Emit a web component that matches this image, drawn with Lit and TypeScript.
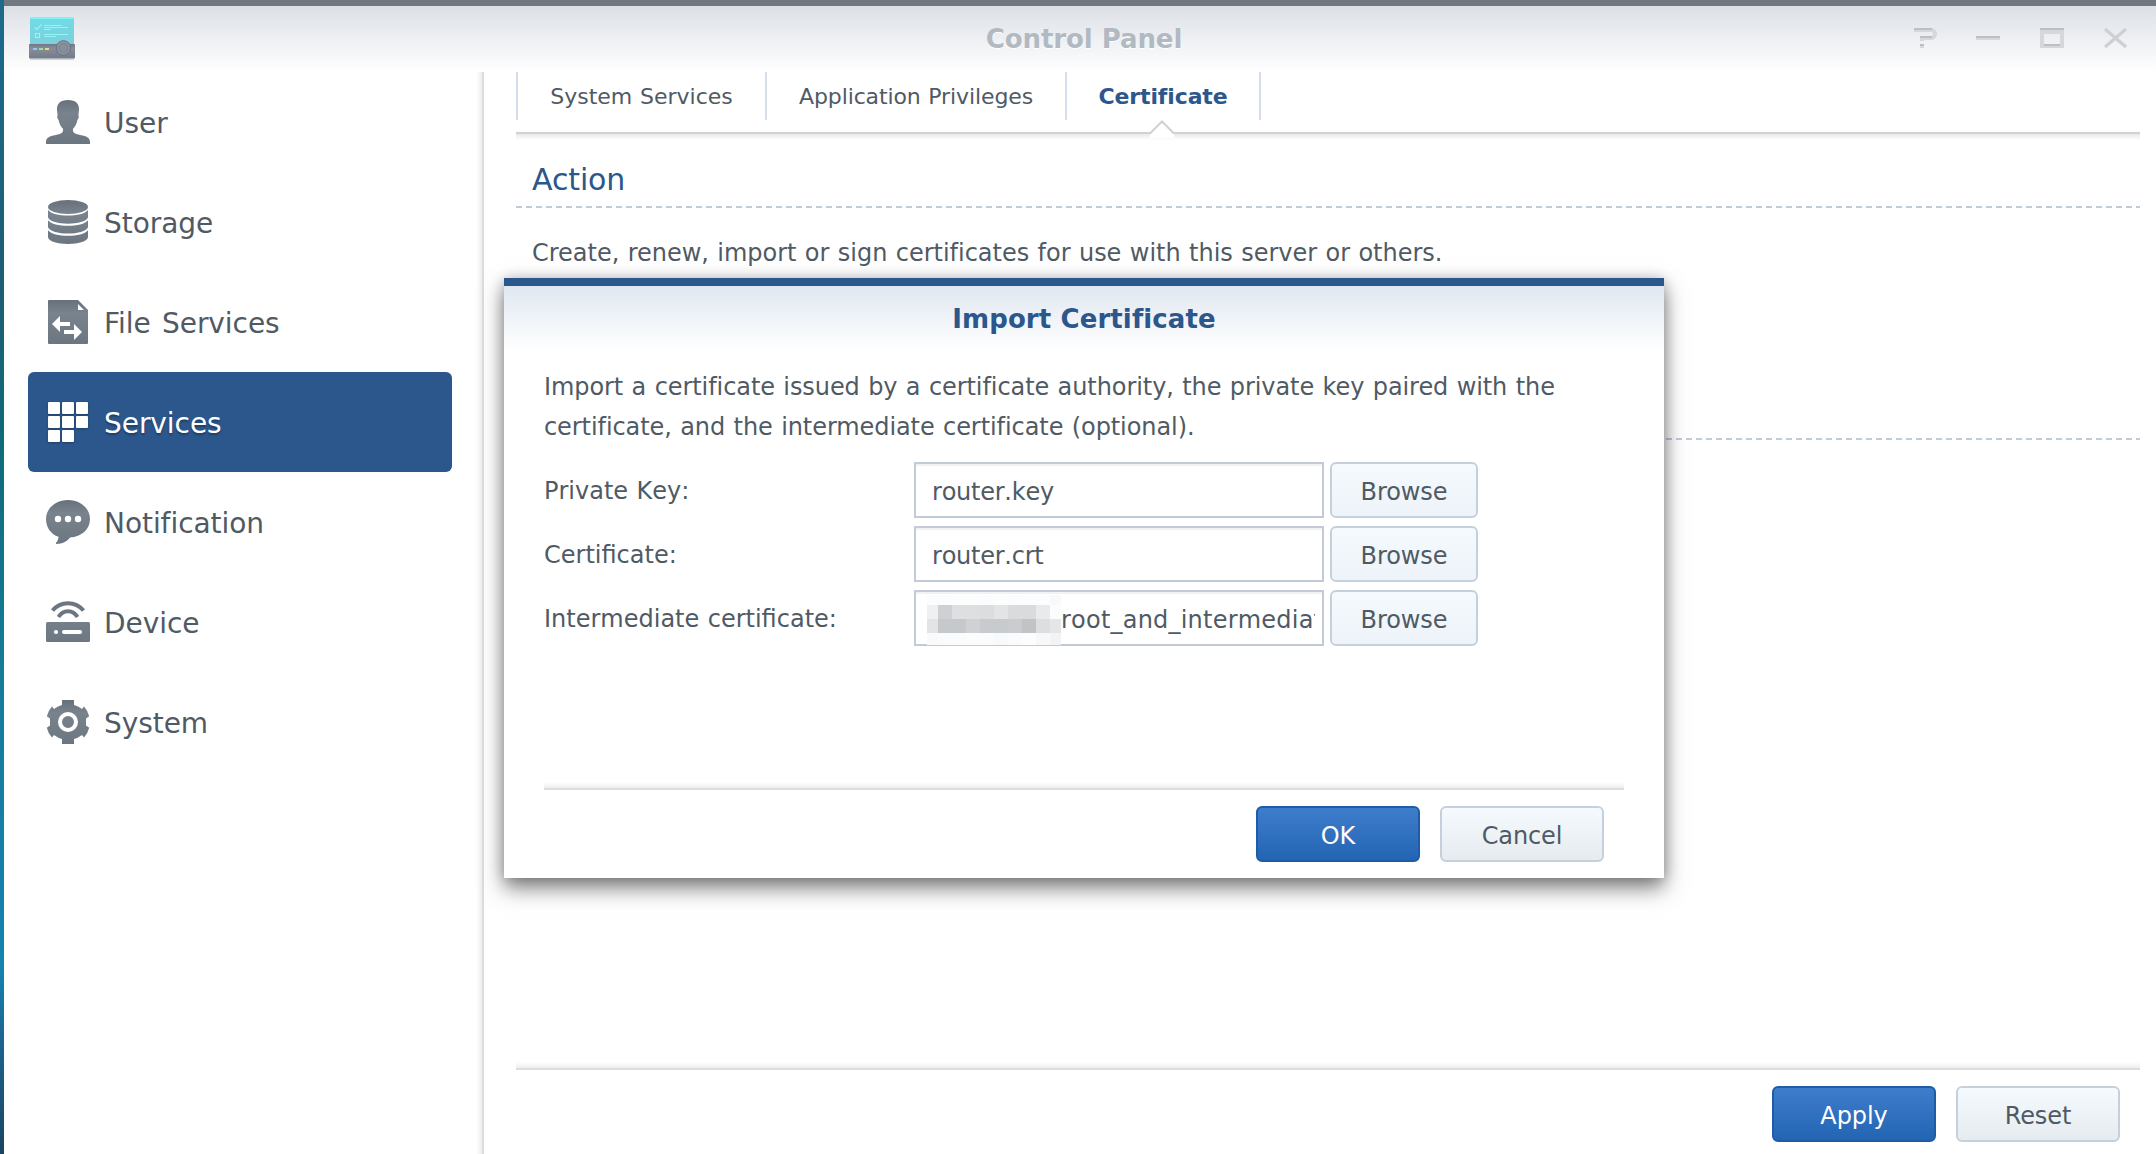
import { LitElement, html, css, svg, nothing } from "lit";
import { customElement, property } from "lit/decorators.js";

const grey = "url(#g)";
const shade = svg`<defs><linearGradient id="g" x1="0" y1="0" x2="0" y2="44" gradientUnits="userSpaceOnUse"><stop offset="0" stop-color="#68717b"/><stop offset=".3" stop-color="#79838d"/><stop offset="1" stop-color="#6c7681"/></linearGradient></defs>`;

const icons: Record<string, unknown> = {
  user: svg`<path fill=${grey} d="M22 0C14 0 10.600 4 11 10l.6 5.500c-.8.7-.2 3.600.9 4.200.8 4 2.300 6.800 4.500 9 .4 3.600-1 4.600-4.500 5.600C5 36.200 0 36.600 0 42v2h44v-2c0-5.400-5-5.800-12.500-7.700-3.500-1-4.900-2-4.500-5.600 2.200-2.200 3.700-5 4.500-9 1.100-.6 1.700-3.500.9-4.200L33 10C33.400 4 30 0 22 0z"/>`,
  storage: svg`<g fill=${grey}><ellipse cx="22" cy="7" rx="20" ry="7"/><path d="M2 10c3 3.800 11 5.600 20 5.600S39 13.800 42 10v7.500c-2 4-10 6.200-20 6.200S4 21.500 2 17.500z"/><path d="M2 20.300c3 3.800 11 5.500 20 5.500s17-1.700 20-5.500v7c-2 4-10 6.300-20 6.300S4 31.300 2 27.300z"/><path d="M2 30.300c3 3.800 11 5.500 20 5.500s17-1.700 20-5.500V37c0 4-9 7-20 7S2 41 2 37z"/></g>`,
  file: svg`<path fill=${grey} d="M3 0h29l10 10v33a1 1 0 0 1-1 1H3a1 1 0 0 1-1-1V1a1 1 0 0 1 1-1z"/><path fill="#fff" d="M32 4v6h6zM6 24l8-8v6h10v4H14v6zM36 32l-8 8v-6H18v-4h10v-6z"/>`,
  services: svg`<g fill="#fff">${[[2, 2], [16, 2], [30, 2], [2, 16], [16, 16], [30, 16], [2, 30], [16, 30]].map(([x, y]) => svg`<rect x=${x} y=${y} width="12" height="12" rx="1"/>`)}</g>`,
  notification: svg`<path fill=${grey} d="M22 0C34.200 0 44 8.200 44 19c0 10.500-8.500 17.700-20 18.600-3 4-7.500 6.400-13.600 6.400-.8-.2-.6-.9-.2-1.500 1.600-1.800 2.300-3.600 2.300-5.800C5 34.500 0 27.500 0 19 0 8.200 9.800 0 22 0z"/><g fill="#fff"><circle cx="12" cy="19" r="3.200"/><circle cx="22" cy="19" r="3.200"/><circle cx="32" cy="19" r="3.200"/></g>`,
  device: svg`<rect fill=${grey} y="22" width="44" height="20" rx="1.500"/><g fill="none" stroke="#6d7680" stroke-width="4"><path d="M6.500 10.500C14.500.7 29.500.7 37.500 10.500"/><path d="M12.500 17C17 9.200 27 9.200 31.500 17"/></g><circle cx="10" cy="32" r="2.100" fill="#fff"/><rect x="16" y="30" width="20" height="4" rx="2" fill="#fff"/>`,
  system: svg`<path fill=${grey} fill-rule="evenodd" d="M16 0h12v5q4 1 8 4l2-2.500Q42 11 43.200 16.300L40 18.500v7l3.200 2.200Q42 33 38 37.500L36 35q-4 3-8 4v5H16v-5q-4-1-8-4l-2 2.500Q2 33 .8 27.700L4 25.500v-7L.8 16.300Q2 11 6 6.500L8 9q4-3 8-4zM22 12a10 10 0 1 0 0 20 10 10 0 0 0 0-20zM22 16a6 6 0 1 1 0 12 6 6 0 0 1 0-12z"/>`,
};

@customElement("nav-item")
class NavItem extends LitElement {
  @property() label = "";
  @property() icon = "";
  @property({ type: Boolean }) active = false;
  static styles = css`
    :host { display: block; }
    .item { display: flex; align-items: center; gap: 14px; height: 100px; padding-left: 18px; border-radius: 6px; color: #505a64; font-size: 28px; line-height: 34px; letter-spacing: -0.002em; word-spacing: 0.09em; }
    .label { padding-top: 4px; }
    .active { background: #2c578c; color: #fff; text-shadow: 0 2px 2px rgba(0, 0, 0, 0.3); }
    .active svg { filter: drop-shadow(0 1px 1px rgba(0, 0, 0, 0.3)); }
    svg { display: block; flex: none; }
  `;
  render() {
    return html`<div class="item ${this.active ? "active" : ""}">
      <svg width="44" height="44" viewBox="0 0 44 44">${shade}${icons[this.icon]}</svg>
      <span class="label">${this.label}</span>
    </div>`;
  }
}

@customElement("push-button")
class PushButton extends LitElement {
  @property() label = "";
  @property() kind = "plain";
  static styles = css`
    :host { display: block; }
    button { display: block; box-sizing: border-box; width: 164px; height: 56px; padding: 3px 0 0; border: 2px solid #c6d0dc; border-radius: 6px; background: linear-gradient(#f5faff, #e6ebf0); color: #505a64; font: 24px/28px "DejaVu Sans", sans-serif; text-align: center; letter-spacing: -0.004em; }
    .primary { border-color: #1f5ca6; background: linear-gradient(#3d7dcc, #2465b3); color: #fff; }
    .browse { width: 148px; background: linear-gradient(#f5faff, #eef3f9); }
  `;
  render() {
    return html`<button class=${this.kind}>${this.label}</button>`;
  }
}

const mosaic = [
  ["#fbfcfd", "#fbfcfd", "#fcfdfd", "#fcfdfd", "#fbfcfd", "#fcfdfd", "#fbfcfd", "#fcfdfe", "#fcfdfe", "#f8f9fb"],
  ["#eff0f2", "#cfd0d4", "#dedfe1", "#dedfe1", "#dcdddf", "#e3e4e6", "#dadbdd", "#dadbdd", "#e9eaec", "#fbfcfc"],
  ["#e3e4e6", "#c5c9cb", "#c5c9cb", "#d0d1d5", "#c7cbcd", "#c7cbcd", "#cbccd0", "#c1c4c7", "#dddee0", "#e5e6e8"],
  ["#f9fafc", "#fafbfd", "#fafbfd", "#fbfdfc", "#fafbfd", "#f8f9fb", "#fafbfd", "#fcfdfe", "#f7f8fa", "#f2f3f5"],
];

@customElement("file-row")
class FileRow extends LitElement {
  @property() label = "";
  @property() file = "";
  @property({ type: Boolean }) masked = false;
  static styles = css`
    :host { display: block; }
    .row { display: grid; grid-template-columns: 370px 410px 154px; height: 56px; font-kerning: none; }
    .label { align-self: center; line-height: 28px; padding-top: 1px; white-space: nowrap; }
    .field { position: relative; box-sizing: border-box; border: 2px solid #c2cad5; box-shadow: inset 0 2px #f0f2f4; background: #fff; padding: 3px 7px 0 16px; display: flex; align-items: center; }
    .value { display: block; overflow: hidden; white-space: nowrap; line-height: 32px; width: 100%; letter-spacing: -0.01em; }
    .masked .value { margin-left: 129px; letter-spacing: 0.009em; }
    .mosaic { position: absolute; left: 11px; top: 3px; display: grid; grid-template-columns: 11px repeat(8, 14px) 11px; grid-template-rows: 10px 14px 14px 12px; }
    .browse { margin-left: 6px; }
  `;
  render() {
    return html`<div class="row">
      <span class="label">${this.label}</span>
      <div class="field ${this.masked ? "masked" : ""}">
        <span class="value">${this.file}</span>
        ${this.masked ? html`<div class="mosaic">${mosaic.flat().map((c) => html`<i style="background:${c}"></i>`)}</div>` : nothing}
      </div>
      <push-button class="browse" kind="browse" label="Browse"></push-button>
    </div>`;
  }
}

@customElement("import-dialog")
class ImportDialog extends LitElement {
  static styles = css`
    :host { display: flex; flex-direction: column; box-sizing: border-box; width: 1160px; height: 600px; background: #fff linear-gradient(#e0e7f1, #fff) no-repeat 0 0 / 100% 64px; border-top: 8px solid #2c578c; box-shadow: 0 10px 20px rgba(0, 0, 0, 0.5), 0 0 12px rgba(0, 0, 0, 0.18); padding: 0 40px 16px; }
    h2 { margin: 0; height: 81px; line-height: 66px; font-size: 26px; color: #2c578c; text-align: center; letter-spacing: 0.004em; }
    p { margin: 0; height: 95px; line-height: 40px; white-space: pre; letter-spacing: -0.0032em; word-spacing: 0.036em; }
    .rows { display: grid; gap: 8px; flex: 1; align-content: start; letter-spacing: 0; word-spacing: 0.034em; }
    .foot { display: flex; justify-content: flex-end; gap: 20px; padding: 16px 20px 0 0; border-top: 2px solid #ddd; }
    .fade { height: 6px; background: linear-gradient(#fff, #eee); }
  `;
  render() {
    return html`<h2>Import Certificate</h2>
      <p>${"Import a certificate issued by a certificate authority, the private key paired with the\ncertificate, and the intermediate certificate (optional)."}</p>
      <div class="rows">
        <file-row label="Private Key:" file="router.key"></file-row>
        <file-row label="Certificate:" file="router.crt"></file-row>
        <file-row label="Intermediate certificate:" file="root_and_intermediat" masked></file-row>
      </div>
      <div class="fade"></div>
      <div class="foot">
        <push-button kind="primary" label="OK"></push-button>
        <push-button label="Cancel"></push-button>
      </div>`;
  }
}

@customElement("app-root")
class AppRoot extends LitElement {
  static styles = css`
    :host { display: flex; box-sizing: border-box; position: relative; width: 2156px; height: 1154px; overflow: hidden; font: 24px "DejaVu Sans", sans-serif; color: #505a64; background: linear-gradient(#1d6a8c, #1d5f73 25%, #106a78 38%, #157c9a 58%, #1582b0 84%, #1d6590 90%, #1a4562); padding-left: 4px; }
    .window { flex: 1; display: flex; flex-direction: column; background: #fff; border-top: 6px solid #717880; }
    header { height: 66px; flex: none; display: grid; grid-template-columns: 1fr auto 1fr; align-items: center; background: linear-gradient(#dce0e6, #fff); padding: 0 28px 0 25px; }
    header svg { display: block; }
    h1 { margin: 0; font-size: 26px; line-height: 30px; color: #b1b9c2; letter-spacing: -0.003em; text-shadow: 0 1px 1px #fff; padding-left: 11px; }
    .controls { justify-self: end; margin-bottom: 2px; }
    .body { flex: 1; display: flex; min-height: 0; }
    nav { width: 472px; padding: 0 24px; box-sizing: border-box; flex: none; }
    .edge { width: 8px; flex: none; background: linear-gradient(90deg, #fff, #ededed 6px, #dcdcdc 6px); }
    main { flex: 1; display: flex; flex-direction: column; padding: 0 16px 12px 32px; }
    .tabs { display: flex; height: 60px; font-size: 22px; }
    .tab { box-sizing: border-box; height: 48px; border-left: 2px solid #d5dfeb; line-height: 50px; text-align: center; white-space: nowrap; word-spacing: 0.034em; }
    .t1 { width: 249px; } .t2 { width: 300px; letter-spacing: -0.005em; } .t3 { width: 194px; position: relative; color: #2c578c; font-weight: bold; letter-spacing: -0.005em; } .t4 { width: 2px; }
    .caret { position: absolute; left: 81px; top: 46px; z-index: 1; display: block; }
    .rule { height: 8px; flex: none; background: linear-gradient(#d2d2d2 2px, #e9e9e9 2px, #fff); }
    h3 { margin: 0; height: 66px; line-height: 79px; padding-left: 16px; font-size: 30px; font-weight: normal; color: #2c578c; letter-spacing: -0.004em; }
    .dash { height: 2px; flex: none; background: repeating-linear-gradient(90deg, #c0cbd8 0 6px, transparent 6px 10px); }
    p { margin: 0; height: 230px; line-height: 90px; padding-left: 16px; letter-spacing: -0.0008em; word-spacing: 0.034em; }
    .space { flex: 1; }
    .fade { height: 6px; background: linear-gradient(#fff, #eee); }
    footer { display: flex; justify-content: flex-end; gap: 20px; padding: 16px 20px 0 0; border-top: 2px solid #ddd; }
    import-dialog { position: absolute; left: 504px; top: 278px; }
  `;
  render() {
    return html`<div class="window">
        <header>
          <svg width="46" height="44" viewBox="0 0 46 44">
            <defs><linearGradient id="c" x2="0" y2="1"><stop stop-color="#6fdce6"/><stop offset="1" stop-color="#7fcdda"/></linearGradient><linearGradient id="d" x2="0" y2="1"><stop stop-color="#6f7884"/><stop offset=".3" stop-color="#858e9a"/><stop offset="1" stop-color="#727b87"/></linearGradient></defs>
            <rect x="1" width="44" height="30" rx="2" fill="url(#c)"/><path d="M2 1h42" stroke="#7bf5f5" stroke-width="2"/>
            <path d="M6 10.500l2 2 4.500-5M6.500 16.500h4v4h-4zM15 8.500h18M15 10.500h24M15 12.500h7M15 17.500h24M15 19.500h12" fill="none" stroke="#8ff8f4" stroke-width="1.200"/>
            <rect y="27" width="46" height="14.500" rx="1" fill="url(#d)"/><path d="M1 42h44" stroke="#a5abb3"/>
            <path d="M4 32h4" stroke="#8fc9fb" stroke-width="2"/><path d="M10 32h4" stroke="#a9dd83" stroke-width="2"/><path d="M16 32h4" stroke="#ecd582" stroke-width="2"/>
            <circle cx="34.500" cy="31" r="7.300" fill="#8a94a0" stroke="#68717d"/><circle cx="34.500" cy="31" r="4.500" fill="#85909c" stroke="#78828e"/>
          </svg>
          <h1>Control Panel</h1>
          <svg class="controls" width="214" height="20" viewBox="0 0 214 20" fill="none">
            <g stroke="#d5d7db" stroke-width="4"><path d="M0 2h17a4 4 0 0 1 0 8H8v3M6 18h4M62 10h24"/><path d="M128 4h20v14h-20z"/><path d="M191 1l21 18M212 1l-21 18" stroke-width="3.200" stroke="#cdcfd3"/></g>
            <g stroke="#bebfc2" stroke-width="2"><path d="M0 1h18M6 9h12M6 17h4M62 9h24M126 1h24M130 17h16"/></g>
          </svg>
        </header>
        <div class="body">
          <nav>
            <nav-item icon="user" label="User"></nav-item>
            <nav-item icon="storage" label="Storage"></nav-item>
            <nav-item icon="file" label="File Services"></nav-item>
            <nav-item icon="services" label="Services" active></nav-item>
            <nav-item icon="notification" label="Notification"></nav-item>
            <nav-item icon="device" label="Device"></nav-item>
            <nav-item icon="system" label="System"></nav-item>
          </nav>
          <div class="edge"></div>
          <main>
            <div class="tabs">
              <div class="tab t1">System Services</div>
              <div class="tab t2">Application Privileges</div>
              <div class="tab t3">Certificate<svg class="caret" width="28" height="20" viewBox="0 0 28 20"><path d="M2 15L14 3l12 12v5H2z" fill="#fff"/><path d="M1 15h1.500L14 3.500 25.500 15H27" fill="none" stroke="#d0d0d0" stroke-width="2"/></svg></div>
              <div class="tab t4"></div>
            </div>
            <div class="rule"></div>
            <h3>Action</h3>
            <div class="dash"></div>
            <p>Create, renew, import or sign certificates for use with this server or others.</p>
            <div class="dash"></div>
            <div class="space"></div>
            <div class="fade"></div>
            <footer>
              <push-button kind="primary" label="Apply"></push-button>
              <push-button label="Reset"></push-button>
            </footer>
          </main>
        </div>
      </div>
      <import-dialog></import-dialog>`;
  }
}
